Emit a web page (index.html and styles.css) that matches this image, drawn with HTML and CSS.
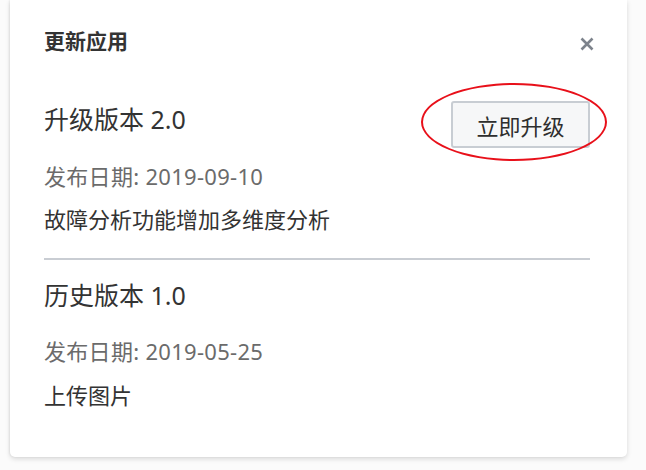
FILE: index.html
```html
<!DOCTYPE html>
<html lang="zh-CN">
<head>
<meta charset="utf-8">
<title>更新应用</title>
<link rel="stylesheet" href="styles.css">
</head>
<body>
<div class="page">
  <div class="dialog">
    <div class="dialog-header">
      <h2 class="dialog-title">更新应用</h2>
      <svg class="close" width="14" height="14" viewBox="0 0 14 14" aria-label="关闭">
        <path d="M1.5 1.5 L12.5 12.5 M12.5 1.5 L1.5 12.5" stroke="#7d838c" stroke-width="2.6" stroke-linecap="butt" fill="none"/>
      </svg>
    </div>

    <div class="release">
      <div class="release-head">
        <h3 class="version">升级版本 2.0</h3>
        <div class="btn-wrap">
          <button class="btn">立即升级</button>
          <span class="annotation"></span>
        </div>
      </div>
      <p class="date">发布日期: 2019-09-10</p>
      <p class="desc first-desc">故障分析功能增加多维度分析</p>
    </div>

    <hr class="divider">

    <div class="release history">
      <h3 class="version">历史版本 1.0</h3>
      <p class="date date-2">发布日期: 2019-05-25</p>
      <p class="desc desc-2">上传图片</p>
    </div>
  </div>
</div>
</body>
</html>
```

FILE: styles.css
```css
html, body {
  margin: 0;
  padding: 0;
}

body {
  width: 646px;
  height: 470px;
  overflow: hidden;
  background: #fbfbfb;
  font-family: "Noto Sans", "Noto Sans CJK SC", sans-serif;
  color: #333;
}

.page {
  padding-left: 10px;
  width: 617px;
}

.dialog {
  background: #fff;
  border-radius: 0 0 5px 5px;
  box-shadow: 0 2px 5px rgba(0, 0, 0, 0.14), -1px 0 2px rgba(0, 0, 0, 0.05);
  padding: 26px 37px 47px 34px;
}

.dialog-header {
  display: flex;
  align-items: center;
  justify-content: space-between;
}

.dialog-title {
  margin: 0;
  font-size: 21px;
  line-height: 30px;
  font-weight: bold;
  color: #333;
}

.close {
  display: block;
  margin-top: 6px;
  margin-right: -4px;
}

.release-head {
  display: flex;
  justify-content: space-between;
  align-items: flex-start;
  margin-top: 45px;
}

.version {
  margin: 2px 0 0 0;
  font-size: 25px;
  line-height: 32px;
  font-weight: normal;
  color: #333;
}

.btn-wrap {
  position: relative;
}

.btn {
  display: block;
  width: 139px;
  height: 47px;
  padding: 0;
  border: 2px solid #c8cdd3;
  border-radius: 3px;
  background: #f6f7f8;
  font-family: "Noto Sans", "Noto Sans CJK SC", sans-serif;
  font-size: 22px;
  color: #2e2e2e;
}

.annotation {
  position: absolute;
  left: -30px;
  top: -18px;
  width: 186px;
  height: 78px;
  border: 2px solid #e8101a;
  border-radius: 50%;
  box-sizing: border-box;
  pointer-events: none;
}

.date {
  margin: 13px 0 0 0;
  font-size: 22px;
  line-height: 30px;
  letter-spacing: 0.3px;
  color: #6b6b6b;
}

.desc {
  margin: 13px 0 0 0;
  font-size: 22px;
  line-height: 30px;
  color: #333;
}

.divider {
  margin: 24px 0 0 0;
  border: 0;
  height: 2px;
  background: #c9cdd3;
}

.history .version {
  margin-top: 19px;
}

.date-2 {
  margin-top: 25px;
}

.desc-2 {
  margin-top: 14px;
}
```
